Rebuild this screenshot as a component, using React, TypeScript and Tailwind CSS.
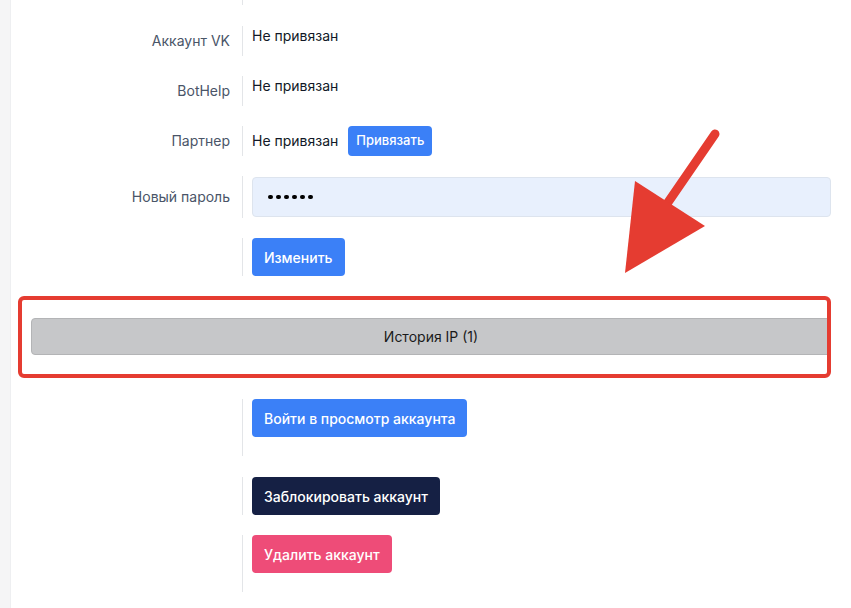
const font = { fontFamily: 'Inter, "Noto Sans", sans-serif' };

function Row({ label, children, className = '' }: { label?: string; children: React.ReactNode; className?: string }) {
  return (
    <div className={`flex ${className}`}>
      <div className="w-[231px] shrink-0 flex items-center justify-end pr-[12px] text-[14px] text-[#4a5568] -mt-[1px]">
        {label}
      </div>
      <div className="flex-1 border-l border-[#e3e5e8] pl-[9px] flex items-start">{children}</div>
    </div>
  );
}

export default function App() {
  return (
    <div className="relative flex w-[851px] h-[608px] overflow-hidden bg-white" style={font}>
      <div className="w-[11px] shrink-0 bg-[#f5f5f6] border-r border-[#eeeff1]" />
      <div className="flex-1 bg-white pr-[20px]">
        <Row className="h-[6px] -mt-[1px]">{null}</Row>

        <Row label="Аккаунт VK" className="mt-[21px] h-[30px]">
          <span className="text-[14px] leading-[20px] text-[#111827]">Не привязан</span>
        </Row>
        <Row label="BotHelp" className="mt-[20px] h-[30px]">
          <span className="text-[14px] leading-[20px] text-[#111827]">Не привязан</span>
        </Row>
        <Row label="Партнер" className="mt-[20px] h-[30px]">
          <div className="flex items-center h-full gap-[10px]">
            <span className="text-[14px] leading-[20px] text-[#111827]">Не привязан</span>
            <button className="h-[30px] px-[8px] rounded-[4px] bg-[#3b80f7] text-white text-[13px] font-medium">
              Привязать
            </button>
          </div>
        </Row>
        <Row label="Новый пароль" className="mt-[20px] h-[42px]">
          <div className="mt-[1px] w-full h-[40px] rounded-[4px] bg-[#e8f0fd] border border-[#dde4ee] flex items-center pl-[15px] gap-[3.6px]">
            {[0, 1, 2, 3, 4, 5].map(i => (
              <span key={i} className="w-[4.5px] h-[4.5px] rounded-full bg-black" />
            ))}
          </div>
        </Row>
        <Row className="mt-[20px] h-[38px]">
          <button className="h-[38px] px-[12px] rounded-[4px] bg-[#3b80f7] text-white text-[14px] font-medium">
            Изменить
          </button>
        </Row>

        <div className="relative mt-[42px] ml-[20px]">
          <div className="h-[37px] rounded-[4px] bg-[#c6c7c9] border border-[#b3b4b6] flex items-center justify-center text-[14px] text-[#1a1a1a]">
            История IP (1)
          </div>
          <div className="absolute -left-[13px] -top-[22px] w-[813px] h-[82px] rounded-[6px] border-[4px] border-[#e53c31]" />
        </div>

        <Row className="mt-[44px] h-[57px]">
          <button className="h-[38px] px-[12px] rounded-[4px] bg-[#3b80f7] text-white text-[14px] font-medium">
            Войти в просмотр аккаунта
          </button>
        </Row>
        <Row className="mt-[21px] h-[38px]">
          <button className="h-[38px] px-[12px] rounded-[4px] bg-[#152044] text-white text-[14px] font-medium">
            Заблокировать аккаунт
          </button>
        </Row>
        <Row className="mt-[20px] h-[57px]">
          <button className="h-[38px] px-[12px] rounded-[4px] bg-[#ee4c78] text-white text-[14px] font-medium">
            Удалить аккаунт
          </button>
        </Row>
      </div>

      <svg className="absolute left-0 top-0 pointer-events-none" width="851" height="608" viewBox="0 0 851 608">
        <line x1="715" y1="134" x2="660" y2="214" stroke="#e53c31" strokeWidth="9" strokeLinecap="round" />
        <polygon points="625,273 635,181 705,226" fill="#e53c31" />
      </svg>
    </div>
  );
}
